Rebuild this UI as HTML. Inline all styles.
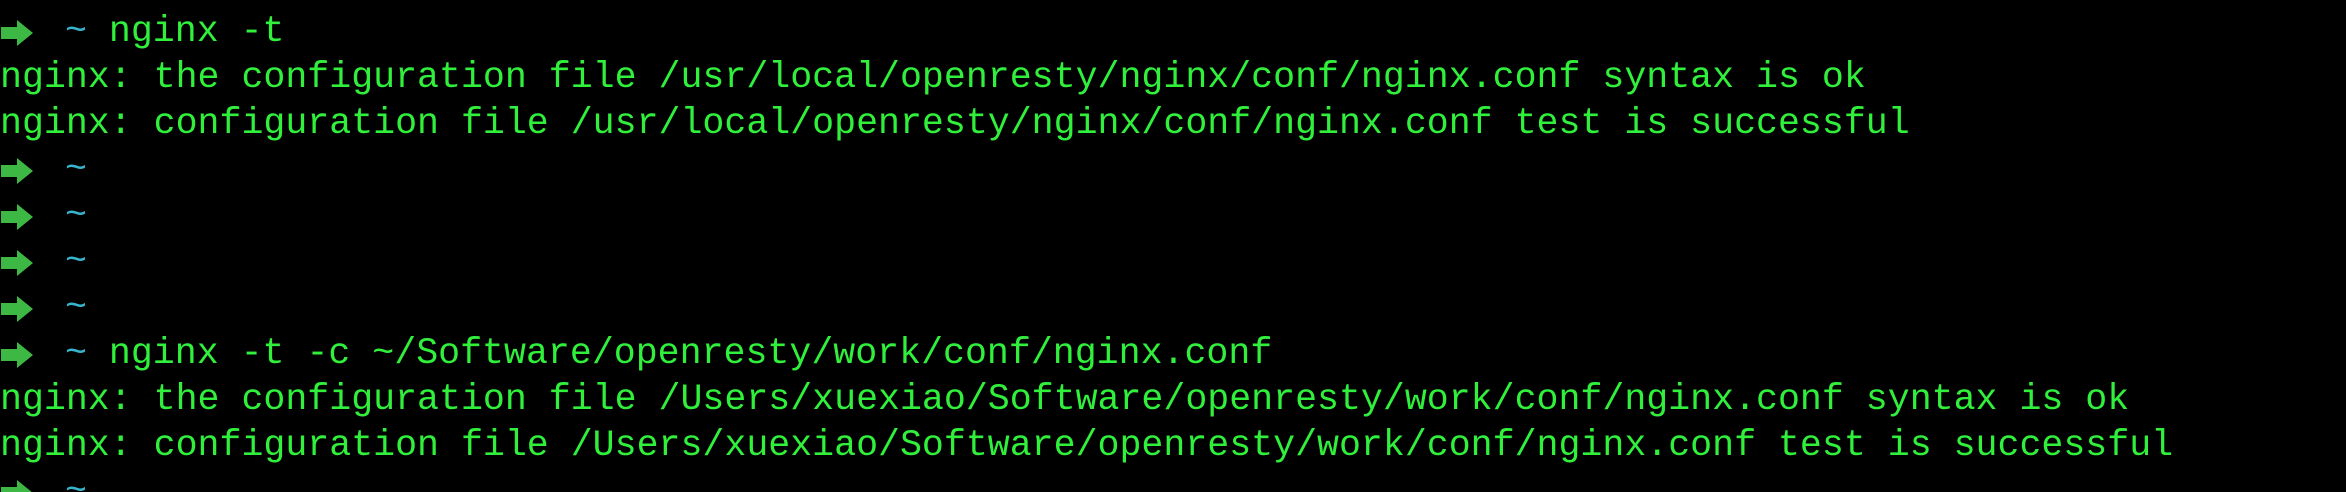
<!DOCTYPE html>
<html><head><meta charset="utf-8"><style>
html,body{margin:0;padding:0;background:#000;width:2346px;height:492px;overflow:hidden}
.t{font-family:"Liberation Mono","DejaVu Sans Mono",monospace;font-size:36.6px;line-height:46px;color:#30f03c;padding-top:9px}
.l{height:46px;position:relative;white-space:pre}
.a{display:inline-block;width:65px;height:46px;vertical-align:top;position:relative}
.a svg{position:absolute;left:0;top:9px}
.c{color:#38b4cc}
</style></head><body><div class="t">
<div class="l"><span class="a"><svg width="34" height="30" viewBox="0 0 34 30"><path d="M1 9h16V2l16 13-16 13v-7H1z" fill="#3db845"/></svg></span><span class="c">~</span> nginx -t</div>
<div class="l">nginx: the configuration file /usr/local/openresty/nginx/conf/nginx.conf syntax is ok</div>
<div class="l">nginx: configuration file /usr/local/openresty/nginx/conf/nginx.conf test is successful</div>
<div class="l"><span class="a"><svg width="34" height="30" viewBox="0 0 34 30"><path d="M1 9h16V2l16 13-16 13v-7H1z" fill="#3db845"/></svg></span><span class="c">~</span></div>
<div class="l"><span class="a"><svg width="34" height="30" viewBox="0 0 34 30"><path d="M1 9h16V2l16 13-16 13v-7H1z" fill="#3db845"/></svg></span><span class="c">~</span></div>
<div class="l"><span class="a"><svg width="34" height="30" viewBox="0 0 34 30"><path d="M1 9h16V2l16 13-16 13v-7H1z" fill="#3db845"/></svg></span><span class="c">~</span></div>
<div class="l"><span class="a"><svg width="34" height="30" viewBox="0 0 34 30"><path d="M1 9h16V2l16 13-16 13v-7H1z" fill="#3db845"/></svg></span><span class="c">~</span></div>
<div class="l"><span class="a"><svg width="34" height="30" viewBox="0 0 34 30"><path d="M1 9h16V2l16 13-16 13v-7H1z" fill="#3db845"/></svg></span><span class="c">~</span> nginx -t -c ~/Software/openresty/work/conf/nginx.conf</div>
<div class="l">nginx: the configuration file /Users/xuexiao/Software/openresty/work/conf/nginx.conf syntax is ok</div>
<div class="l">nginx: configuration file /Users/xuexiao/Software/openresty/work/conf/nginx.conf test is successful</div>
<div class="l"><span class="a"><svg width="34" height="30" viewBox="0 0 34 30"><path d="M1 9h16V2l16 13-16 13v-7H1z" fill="#3db845"/></svg></span><span class="c">~</span></div>
</div></body></html>
